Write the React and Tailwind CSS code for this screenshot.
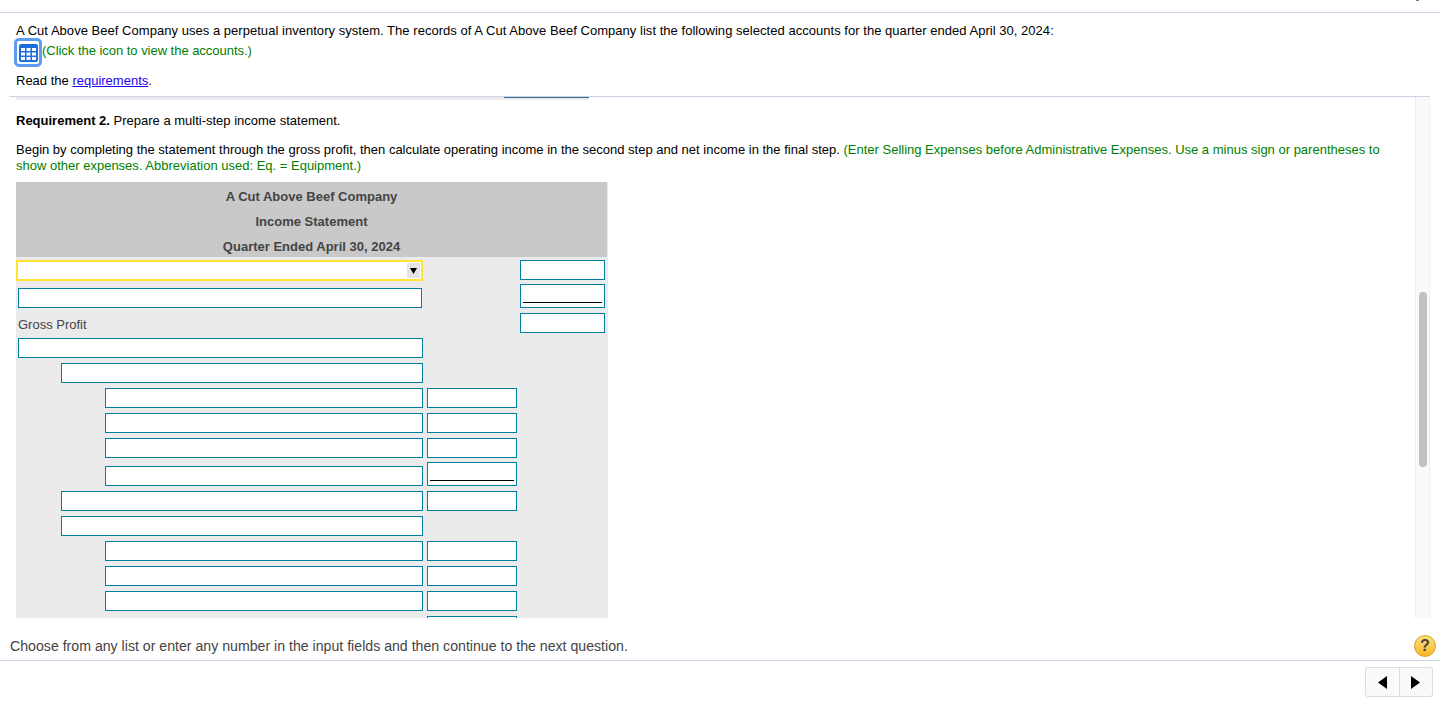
const ROWS = [
  { left: 'select', right: true },
  { left: 'ml-[2px] w-[404px]', right: 'total', mt: '-mt-[1px]', tall: true },
  { label: 'Gross Profit', right: true },
  { left: 'ml-[2px] w-[405px]' },
  { left: 'ml-[45px] w-[362px]' },
  { left: 'ml-[89px] w-[318px]', mid: true },
  { left: 'ml-[89px] w-[318px]', mid: true },
  { left: 'ml-[89px] w-[318px]', mid: true },
  { left: 'ml-[89px] w-[318px]', mid: 'total', mt: '-mt-[1px]', tall: true },
  { left: 'ml-[45px] w-[362px]', mid: true },
  { left: 'ml-[45px] w-[362px]' },
  { left: 'ml-[89px] w-[318px]', mid: true },
  { left: 'ml-[89px] w-[318px]', mid: true },
  { left: 'ml-[89px] w-[318px]', mid: true },
  { mid: true },
];

function Box({ className = '', total }) {
  return (
    <div className={`relative bg-white border border-[#007fa3] ${total ? 'h-[24px]' : 'h-[20px]'} ${className}`}>
      {total && <div className="absolute left-[2px] right-[2px] bottom-[4px] h-px bg-black" />}
    </div>
  );
}

function Row({ row }) {
  return (
    <div className={`flex shrink-0 items-end ${row.tall ? 'h-[24px]' : 'h-[20px]'} ${row.mt || ''}`}>
      <div className="w-[407px] shrink-0">
        {row.left === 'select' && (
          <div className="flex h-[21px] w-[407px] items-center justify-end bg-white border-2 border-[#ffe433] pr-[1px] mb-[-1px]">
            <div className="flex h-[15px] w-[13px] items-center justify-center bg-[#e4e4e4]">
              <svg width="7" height="6" viewBox="0 0 7 6"><path d="M0 0h7L3.5 6z" fill="#000" /></svg>
            </div>
          </div>
        )}
        {row.left && row.left !== 'select' && <Box className={row.left} />}
        {row.label && (
          <div className="ml-[2px] h-[20px] text-[13px] leading-[23px] text-[#444]">{row.label}</div>
        )}
      </div>
      <div className="ml-[4px] w-[90px] shrink-0">
        {row.mid && <Box total={row.mid === 'total'} />}
      </div>
      <div className="ml-[3px] w-[85px] shrink-0">
        {row.right && <Box total={row.right === 'total'} />}
      </div>
    </div>
  );
}

export default function App() {
  return (
    <div className="relative flex h-[703px] w-[1440px] flex-col overflow-hidden bg-white font-['Liberation_Sans',Arial,sans-serif] text-[13px] text-black">
      {/* Top edge */}
      <div className="flex h-[13px] shrink-0 justify-end border-b border-[#ccd2e2] pr-[21px]">
        <div className="h-[1px] w-[3px] bg-[#777]" />
      </div>

      {/* Question stem */}
      <div className="h-[83px] shrink-0 pl-[16px]">
        <div className="mt-[9px] h-[18px] leading-[18px] tracking-[0.035px]">
          A Cut Above Beef Company uses a perpetual inventory system. The records of A Cut Above Beef Company list the following selected accounts for the quarter ended April 30, 2024:
        </div>
        <div className="mt-[1px] flex h-[20px] items-center text-[#008000]">
          <div className="-ml-[2px] mt-[3px] flex h-[29px] w-[28px] shrink-0 items-center justify-center rounded-[5px] border-[3px] border-[#5e9bf7] bg-white">
            <svg width="19" height="18" viewBox="0 0 19 18">
              <rect width="19" height="18" rx="2" fill="#1a6fdc" />
              <path d="M2 4h4v3H2zM7.500 4h4v3h-4zM13 4h4v3h-4zM2 8.500h4v3H2zM7.500 8.500h4v3h-4zM13 8.500h4v3h-4zM2 13h4v3H2zM7.500 13h4v3h-4zM13 13h4v3h-4z" fill="#fff" />
            </svg>
          </div>
          <span className="tracking-[-0.03px]">(Click the icon to view the accounts.)</span>
        </div>
        <div className="mt-[11px] h-[18px] leading-[18px]">
          Read the <span className="text-[#2200ee] underline">requirements</span>.
        </div>
      </div>

      {/* Scrolling panel */}
      <div className="ml-[9px] mr-[10px] flex h-[522px] shrink-0 flex-col overflow-hidden border-t border-[#ccd2e2]">
        <div className="flex min-h-0 flex-1">
          <div className="flex min-w-0 flex-1 flex-col pl-[7px]">
            <div className="flex h-[3px] w-[573px] shrink-0 justify-end bg-[#ebebeb]">
              <div className="h-px w-[85px] bg-[#3a6f95]" />
            </div>
            <div className="mt-[12px] h-[18px] shrink-0 leading-[18px]">
              <span className="font-bold">Requirement 2.</span> Prepare a multi-step income statement.
            </div>
            <div className="mt-[12px] w-[1385px] shrink-0 leading-[16px]">
              Begin by completing the statement through the gross profit, then calculate operating income in the second step and net income in the final step.{' '}
              <span className="text-[#008000]">
                (Enter Selling Expenses before Administrative Expenses. Use a minus sign or parentheses to show other expenses. Abbreviation used: Eq. = Equipment.)
              </span>
            </div>

            {/* Income statement */}
            <div className="mt-[8px] flex min-h-0 w-[592px] flex-1 flex-col overflow-hidden bg-[#ebebeb]">
              <div className="w-[591px] shrink-0 bg-[#c9c9c9] text-center text-[13px] font-bold text-[#444]">
                <div className="h-[25px] leading-[30px]">A Cut Above Beef Company</div>
                <div className="h-[25px] leading-[30px]">Income Statement</div>
                <div className="h-[25px] leading-[30px]">Quarter Ended April 30, 2024</div>
              </div>
              <div className="flex flex-col gap-[5px] pt-[3px]">
                {ROWS.map((row, i) => (
                  <Row key={i} row={row} />
                ))}
              </div>
            </div>
          </div>

          {/* Scrollbar */}
          <div className="w-[15px] shrink-0 border-x border-[#efefef] bg-[#fafafa] pl-[3px] pt-[195px]">
            <div className="h-[175px] w-[8px] rounded-full bg-[#c1c1c1]" />
          </div>
        </div>
      </div>

      {/* Footer */}
      <div className="flex h-[43px] shrink-0 items-end justify-between border-b border-[#ccd2e2] pb-[3px] pl-[10px] pr-[4px]">
        <div className="mb-[1px] text-[14.15px] leading-[20px] text-[#444]">Choose from any list or enter any number in the input fields and then continue to the next question.</div>
        <div className="flex h-[22px] w-[22px] items-center justify-center rounded-full border border-[#d8a420] bg-linear-to-b from-[#ffe27a] to-[#f7b51d] text-[16px] font-bold text-[#444]">?</div>
      </div>
      <div className="flex justify-end pr-[7px] pt-[6px]">
        <div className="flex h-[30px] w-[68px] rounded-[3px] border border-[#dcdcdc] bg-[#fafafa]">
          <div className="flex flex-1 items-center justify-center border-r border-[#dcdcdc]">
            <svg width="9" height="13" viewBox="0 0 9 13"><path d="M9 0v13L0 6.500z" fill="#000" /></svg>
          </div>
          <div className="flex flex-1 items-center justify-center">
            <svg width="9" height="13" viewBox="0 0 9 13"><path d="M0 0v13l9-6.500z" fill="#000" /></svg>
          </div>
        </div>
      </div>
    </div>
  );
}
